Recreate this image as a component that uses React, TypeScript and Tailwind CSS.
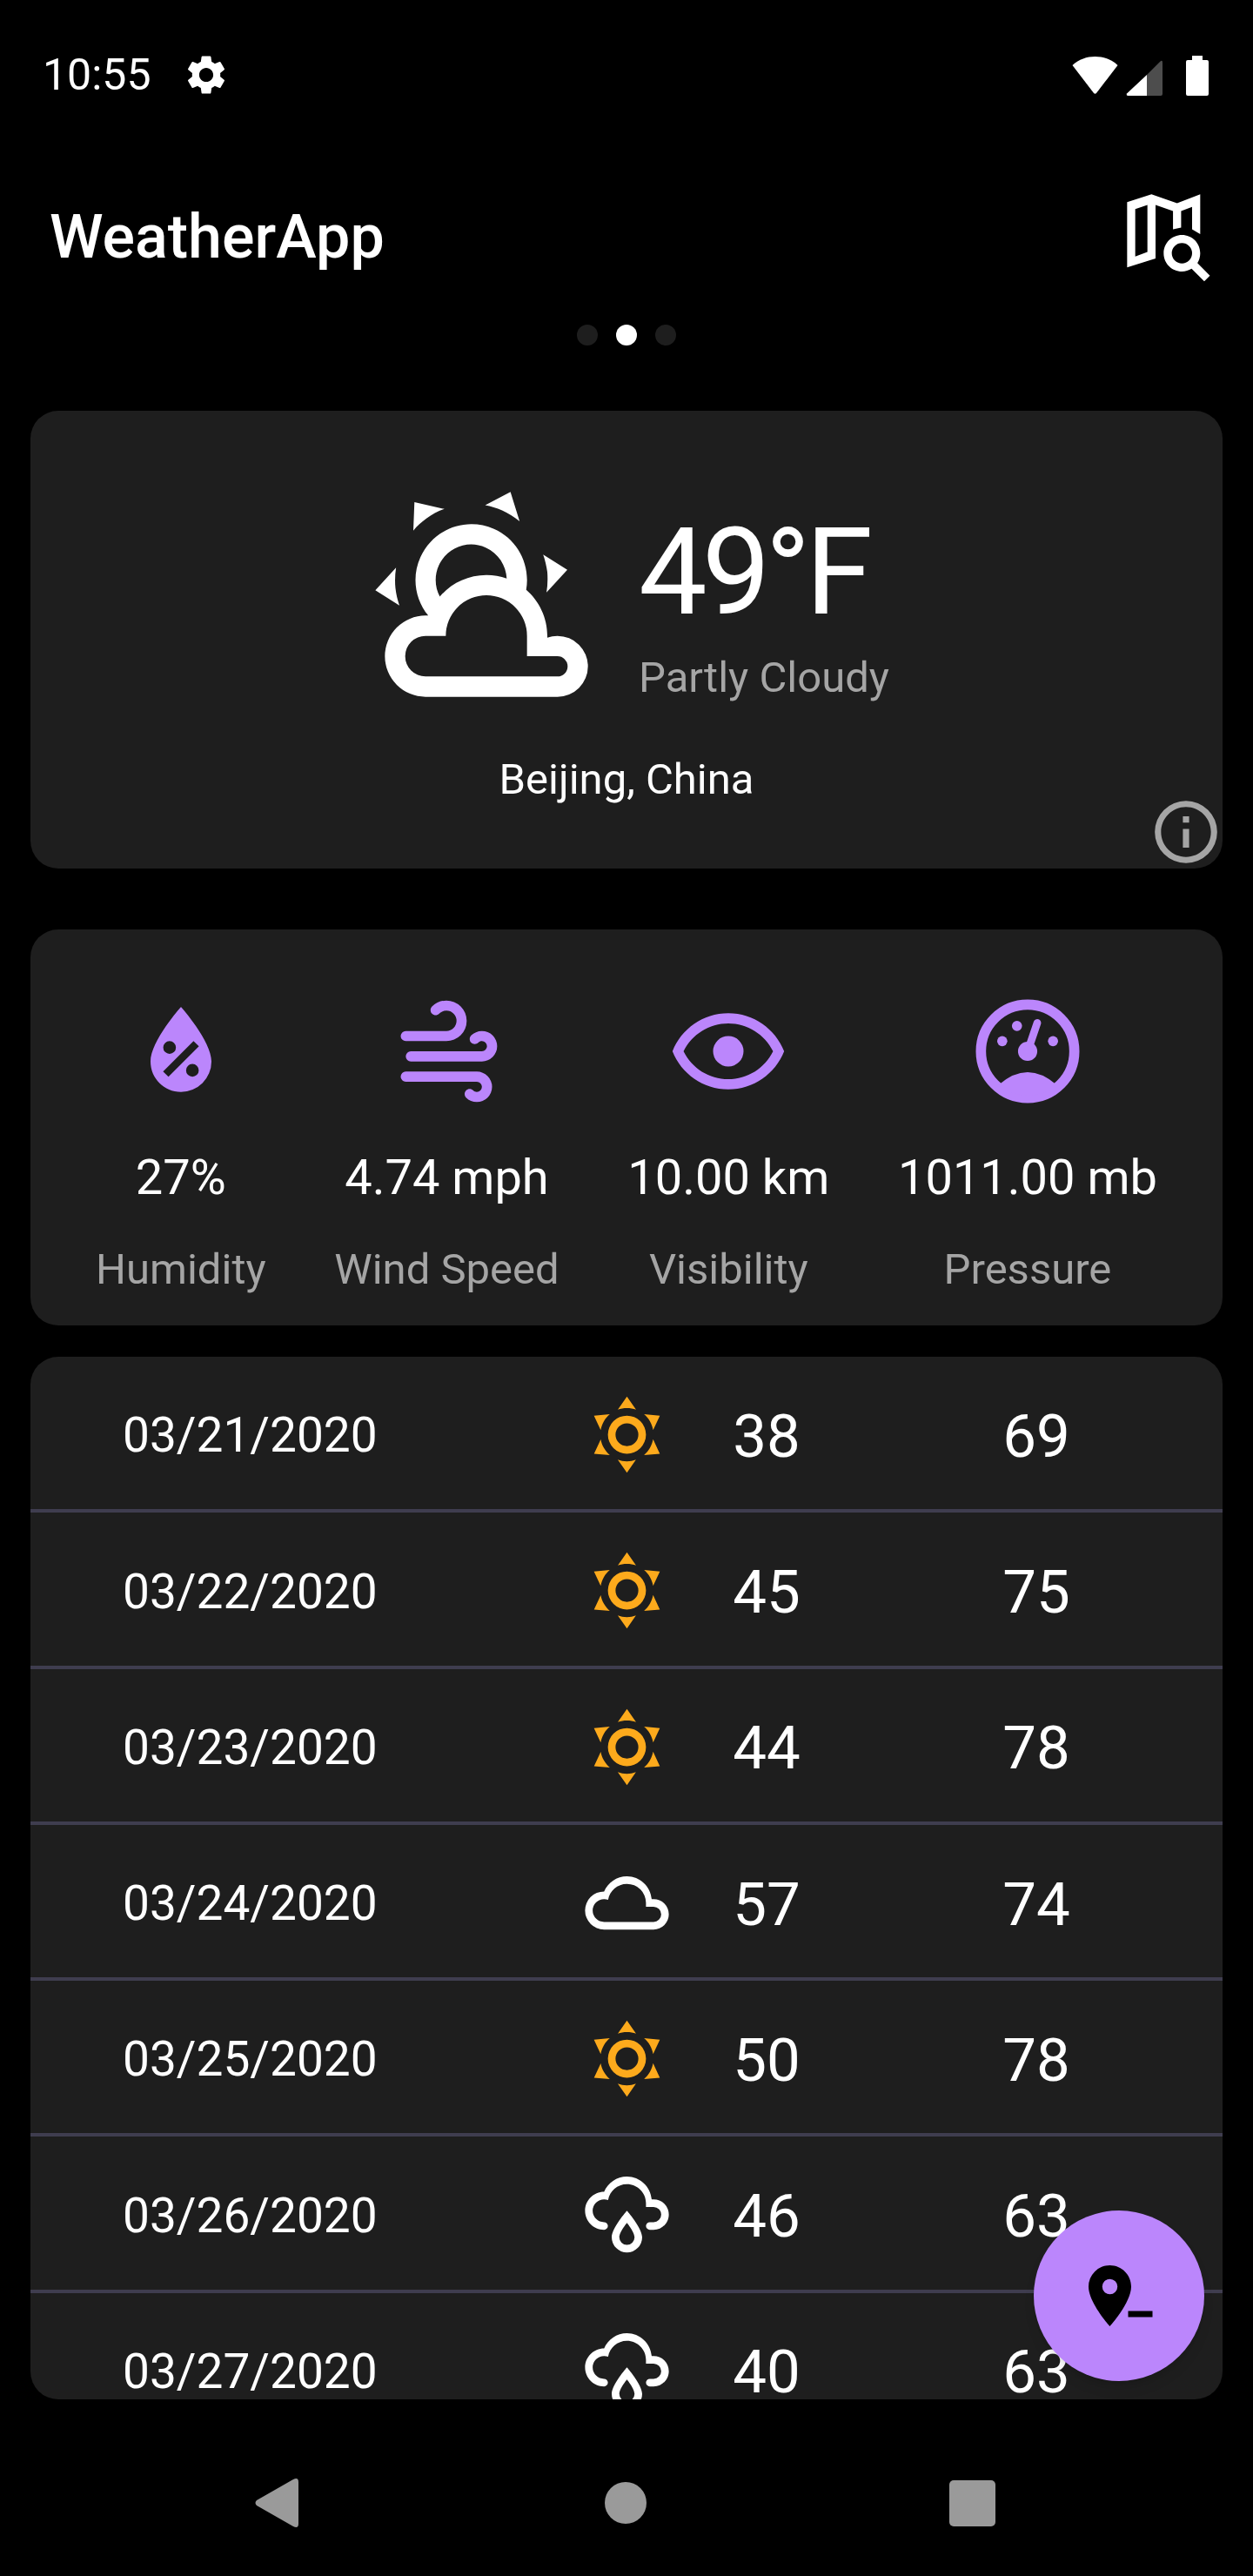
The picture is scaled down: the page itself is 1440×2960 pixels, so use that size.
const SUN =
  "M12,7A5,5 0 0,1 17,12A5,5 0 0,1 12,17A5,5 0 0,1 7,12A5,5 0 0,1 12,7M12,9A3,3 0 0,0 9,12A3,3 0 0,0 12,15A3,3 0 0,0 15,12A3,3 0 0,0 12,9M12,2L14.39,5.42C13.65,5.15 12.84,5 12,5C11.16,5 10.35,5.15 9.61,5.42L12,2M3.34,7L7.5,6.65C6.9,7.16 6.36,7.78 5.94,8.5C5.5,9.24 5.25,10 5.11,10.79L3.34,7M3.36,17L5.12,13.23C5.26,14 5.53,14.78 5.95,15.5C6.37,16.24 6.91,16.86 7.5,17.37L3.36,17M20.65,7L18.88,10.79C18.74,10 18.47,9.23 18.05,8.5C17.63,7.78 17.1,7.15 16.5,6.64L20.65,7M20.64,17L16.5,17.36C17.09,16.85 17.62,16.22 18.04,15.5C18.46,14.77 18.73,14 18.87,13.21L20.64,17M12,22L9.59,18.56C10.33,18.83 11.14,19 12,19C12.82,19 13.63,18.83 14.37,18.56L12,22Z";
const CLOUD =
  "M6,19A5,5 0 0,1 1,14A5,5 0 0,1 6,9C7,6.65 9.3,5 12,5C15.43,5 18.24,7.66 18.5,11.03L19,11A4,4 0 0,1 23,15A4,4 0 0,1 19,19H6M19,13H17V12A5,5 0 0,0 12,7C9.5,7 7.45,8.82 7.06,11.19C6.73,11.07 6.37,11 6,11A3,3 0 0,0 3,14A3,3 0 0,0 6,17H19A2,2 0 0,0 21,15A2,2 0 0,0 19,13Z";
const RAIN =
  "M6,14.03A1,1 0 0,1 7,15.03C7,15.58 6.55,16.03 6,16.03C3.24,16.03 1,13.79 1,11.03C1,8.27 3.24,6.03 6,6.03C7,3.68 9.3,2.03 12,2.03C15.43,2.03 18.24,4.69 18.5,8.06L19,8.03A4,4 0 0,1 23,12.03C23,14.23 21.21,16.03 19,16.03H18C17.45,16.03 17,15.58 17,15.03C17,14.47 17.45,14.03 18,14.03H19A2,2 0 0,0 21,12.03A2,2 0 0,0 19,10.03H17V9.03C17,6.27 14.76,4.03 12,4.03C9.5,4.03 7.45,5.84 7.06,8.21C6.73,8.09 6.37,8.03 6,8.03A3,3 0 0,0 3,11.03A3,3 0 0,0 6,14.03M12,11C12,11 8,15.5 8,18A4,4 0 0,0 16,18C16,15.5 12,11 12,11M12,14.2C12,14.2 10,16.6 10,18A2,2 0 0,0 14,18C14,16.6 12,14.2 12,14.2Z";
const PARTLY =
  "M12.74,5.47C15.1,6.5 16.35,9.03 15.92,11.46C17.19,12.56 18,14.19 18,16V16.17C18.31,16.06 18.65,16 19,16A3,3 0 0,1 22,19A3,3 0 0,1 19,22H6A4,4 0 0,1 2,18A4,4 0 0,1 6,14H6.27C5,12.45 4.6,10.24 5.5,8.26C6.72,5.5 9.97,4.24 12.74,5.47M11.93,7.3C10.16,6.5 8.09,7.31 7.31,9.07C6.85,10.09 6.93,11.22 7.41,12.13C8.5,10.83 10.16,10 12,10C12.7,10 13.38,10.12 14,10.34C13.94,9.06 13.18,7.86 11.93,7.3M13.55,3.64C13,3.4 12.45,3.23 11.88,3.12L14.37,1.82L15.27,4.71C14.76,4.29 14.19,3.93 13.55,3.64M6.09,4.44C5.6,4.79 5.17,5.19 4.8,5.63L4.91,2.82L7.87,3.5C7.25,3.71 6.65,4.03 6.09,4.44M18,9.71C17.91,9.12 17.78,8.55 17.59,8L19.97,9.5L17.92,11.73C18.03,11.08 18.05,10.4 18,9.71M3.04,11.3C3.11,11.9 3.24,12.47 3.43,13L1.06,11.5L3.1,9.28C3,9.93 2.97,10.61 3.04,11.3M19,18H16V16A4,4 0 0,0 12,12A4,4 0 0,0 8,16H6A2,2 0 0,0 4,18A2,2 0 0,0 6,20H19A1,1 0 0,0 20,19A1,1 0 0,0 19,18Z";
const DROP =
  "M12,3.25C12,3.25 6,10 6,14C6,17.32 8.69,20 12,20A6,6 0 0,0 18,14C18,10 12,3.25 12,3.25M14.47,9.97L15.53,11.03L9.53,17.03L8.47,15.97M9.75,10A1.25,1.25 0 0,1 11,11.25A1.25,1.25 0 0,1 9.75,12.5A1.25,1.25 0 0,1 8.5,11.25A1.25,1.25 0 0,1 9.75,10M14.25,14.5A1.25,1.25 0 0,1 15.5,15.75A1.25,1.25 0 0,1 14.25,17A1.25,1.25 0 0,1 13,15.75A1.25,1.25 0 0,1 14.25,14.5Z";
const WIND =
  "M4,10A1,1 0 0,1 3,9A1,1 0 0,1 4,8H12A2,2 0 0,0 14,6A2,2 0 0,0 12,4C11.45,4 10.95,4.22 10.59,4.59C10.2,5 9.56,5 9.17,4.59C8.78,4.2 8.78,3.56 9.17,3.17C9.9,2.45 10.9,2 12,2A4,4 0 0,1 16,6A4,4 0 0,1 12,10H4M19,12A1,1 0 0,0 20,11A1,1 0 0,0 19,10C18.72,10 18.47,10.11 18.29,10.29C17.9,10.68 17.27,10.68 16.88,10.29C16.5,9.9 16.5,9.27 16.88,8.88C17.42,8.34 18.17,8 19,8A3,3 0 0,1 22,11A3,3 0 0,1 19,14H5A1,1 0 0,1 4,13A1,1 0 0,1 5,12H19M18,18H4A1,1 0 0,1 3,17A1,1 0 0,1 4,16H18A3,3 0 0,1 21,19A3,3 0 0,1 18,22C17.17,22 16.42,21.66 15.88,21.12C15.5,20.73 15.5,20.1 15.88,19.71C16.27,19.32 16.9,19.32 17.29,19.71C17.47,19.89 17.72,20 18,20A1,1 0 0,0 19,19A1,1 0 0,0 18,18Z";
const EYE =
  "M12,9A3,3 0 0,1 15,12A3,3 0 0,1 12,15A3,3 0 0,1 9,12A3,3 0 0,1 12,9M12,4.5C17,4.5 21.27,7.61 23,12C21.27,16.39 17,19.5 12,19.5C7,19.5 2.73,16.39 1,12C2.73,7.61 7,4.5 12,4.5M3.18,12C4.83,15.36 8.24,17.5 12,17.5C15.76,17.5 19.17,15.36 20.82,12C19.17,8.64 15.76,6.5 12,6.5C8.24,6.5 4.83,8.64 3.18,12Z";
const GEAR =
  "M19.14,12.94c.04-.3.06-.61.06-.94 0-.32-.02-.64-.07-.94l2.03-1.58c.18-.14.23-.41.12-.61l-1.92-3.32c-.12-.22-.37-.29-.59-.22l-2.39.96c-.5-.38-1.03-.7-1.62-.94l-.36-2.54c-.04-.24-.24-.41-.48-.41h-3.84c-.24 0-.43.17-.47.41l-.36 2.54c-.59.24-1.13.57-1.62.94l-2.39-.96c-.22-.08-.47 0-.59.22L2.74 8.87c-.12.21-.08.47.12.61l2.03 1.58c-.05.3-.09.63-.09.94s.02.64.07.94l-2.03 1.58c-.18.14-.23.41-.12.61l1.92 3.32c.12.22.37.29.59.22l2.39-.96c.5.38 1.03.7 1.62.94l.36 2.54c.05.24.24.41.48.41h3.84c.24 0 .44-.17.47-.41l.36-2.54c.59-.24 1.13-.56 1.62-.94l2.39.96c.22.08.47 0 .59-.22l1.92-3.32c.12-.22.07-.47-.12-.61l-2.01-1.58zM12 15.6c-1.98 0-3.6-1.62-3.6-3.6s1.62-3.6 3.6-3.6 3.6 1.62 3.6 3.6-1.62 3.6-3.6 3.6z";
const MAP_SEARCH =
  "M15.5,12C18,12 20,14 20,16.5C20,17.38 19.75,18.21 19.31,18.9L22.39,22L21,23.39L17.88,20.32C17.19,20.75 16.37,21 15.5,21C13,21 11,19 11,16.5C11,14 13,12 15.5,12M15.5,14A2.5,2.5 0 0,0 13,16.5A2.5,2.5 0 0,0 15.5,19A2.5,2.5 0 0,0 18,16.5A2.5,2.5 0 0,0 15.5,14ZM2,3.9L8,2L14.3,4.2L20,2V11.8L18,10.6V5.1L15.3,6.1V10.2L13.3,10.6V6.1L9,4.6V17.8L2,20ZM4,5.6V17.3L7,16.2V4.6Z";
const MARKER_MINUS =
  "M9,11.5A2.5,2.5 0 0,0 11.5,9A2.5,2.5 0 0,0 9,6.5A2.5,2.5 0 0,0 6.5,9A2.5,2.5 0 0,0 9,11.5M9,2C12.86,2 16,5.13 16,9C16,14.25 9,22 9,22C9,22 2,14.25 2,9A7,7 0 0,1 9,2M15,17H23V19H15V17Z";
const INFO =
  "M11,9H13V7H11M12,20C7.59,20 4,16.41 4,12C4,7.59 7.59,4 12,4C16.41,4 20,7.59 20,12C20,16.41 16.41,20 12,20M12,2A10,10 0 0,0 2,12A10,10 0 0,0 12,22A10,10 0 0,0 22,12A10,10 0 0,0 12,2M11,17H13V11H11V17Z";

function Icon({ d, className }: { d: string; className: string }) {
  return (
    <svg viewBox="0 0 24 24" fill="currentColor" fillRule="evenodd" className={className}>
      <path d={d} />
    </svg>
  );
}

function PressureIcon() {
  return (
    <svg viewBox="0 0 24 24" className="h-[140px] w-[140px] text-[#bb86fc]" fill="currentColor">
      <circle cx="12" cy="12" r="9.2" fill="none" stroke="currentColor" strokeWidth="2" />
      <circle cx="12" cy="12" r="1.9" />
      <path d="M12 12L13.9 6.4" stroke="currentColor" strokeWidth="1.5" strokeLinecap="round" />
      <circle cx="9.9" cy="7" r="1" />
      <circle cx="7" cy="10" r="1" />
      <circle cx="17" cy="10" r="1" />
      <path d="M6.3 18.6Q12 13.6 17.7 18.6A8.7 8.7 0 0 1 6.3 18.6Z" />
    </svg>
  );
}

const stats = [
  { value: "27%", label: "Humidity", icon: <Icon d={DROP} className="h-[140px] w-[140px] text-[#bb86fc]" /> },
  { value: "4.74 mph", label: "Wind Speed", icon: <Icon d={WIND} className="h-[140px] w-[140px] text-[#bb86fc]" /> },
  { value: "10.00 km", label: "Visibility", icon: <Icon d={EYE} className="h-[140px] w-[140px] text-[#bb86fc]" /> },
  { value: "1011.00 mb", label: "Pressure", icon: <PressureIcon /> },
];

const days = [
  { date: "03/21/2020", kind: "sun", low: 38, high: 69 },
  { date: "03/22/2020", kind: "sun", low: 45, high: 75 },
  { date: "03/23/2020", kind: "sun", low: 44, high: 78 },
  { date: "03/24/2020", kind: "cloud", low: 57, high: 74 },
  { date: "03/25/2020", kind: "sun", low: 50, high: 78 },
  { date: "03/26/2020", kind: "rain", low: 46, high: 63 },
  { date: "03/27/2020", kind: "rain", low: 40, high: 63 },
];

function DayIcon({ kind }: { kind: string }) {
  if (kind === "sun") return <Icon d={SUN} className="h-[105px] w-[105px] text-[#fdaa1c]" />;
  if (kind === "cloud") return <Icon d={CLOUD} className="h-[105px] w-[105px] text-white" />;
  return <Icon d={RAIN} className="h-[105px] w-[105px] text-white" />;
}

export default function App() {
  return (
    <div className="relative flex h-[2960px] w-[1440px] flex-col overflow-hidden bg-black font-['Roboto',sans-serif] text-white">
      <div className="flex h-[172px] items-center pl-[49px] pr-[51px]">
        <span className="text-[50px] leading-none">10:55</span>
        <Icon d={GEAR} className="ml-[36px] h-[54px] w-[54px] text-white" />
        <div className="ml-auto flex items-center">
          <svg viewBox="0 0 53 43" className="h-[43px] w-[53px]" fill="white">
            <path d="M0.5 10C8 3 17 0 26.5 0C36 0 45 3 52.5 10L28 42Q26.5 43.5 25 42Z" />
          </svg>
          <svg viewBox="0 0 42 42" className="ml-[9px] mt-[5px] h-[42px] w-[42px]">
            <path d="M1 39.5L24 18V42H2.5Q0 42 1 39.5Z" fill="white" />
            <path d="M24 18L39 3Q42 0 42 4V40Q42 42 40 42H24Z" fill="#4d4d4d" />
          </svg>
          <svg viewBox="0 0 26 46" className="ml-[27px] mt-[1px] h-[46px] w-[26px]" fill="white">
            <path d="M7 0H19V5H24Q26 5 26 7V44Q26 46 24 46H2Q0 46 0 44V7Q0 5 2 5H7Z" />
          </svg>
        </div>
      </div>

      <div className="flex h-[200px] items-center justify-between pl-[57px] pr-[42px]">
        <span className="text-[70px] font-medium leading-none">WeatherApp</span>
        <Icon d={MAP_SEARCH} className="mb-1 h-[112px] w-[112px] text-white" />
      </div>

      <div className="mt-px flex justify-center gap-[21px]">
        <div className="h-6 w-6 rounded-full bg-[#1e1e1e]" />
        <div className="h-6 w-6 rounded-full bg-white" />
        <div className="h-6 w-6 rounded-full bg-[#1e1e1e]" />
      </div>

      <section className="relative mx-[35px] mt-[75px] flex h-[526px] flex-col items-center rounded-[32px] bg-[#1e1e1e] pt-[72px]">
        <div className="flex items-start gap-[35px]">
          <Icon d={PARTLY} className="h-[280px] w-[280px] text-white" />
          <div className="flex w-[287px] flex-col pt-[38px]">
            <span className="whitespace-nowrap text-[140px] leading-[150px] tracking-[-6px]">49°F</span>
            <span className="mt-[17px] whitespace-nowrap text-[49px] leading-[60px] text-[#a5a5a5]">Partly Cloudy</span>
          </div>
        </div>
        <span className="mt-[42px] text-[49px] leading-[60px]">Beijing, China</span>
        <Icon d={INFO} className="absolute -bottom-px -right-px h-[86px] w-[86px] text-[#a5a5a5]" />
      </section>

      <section className="mx-[35px] mt-[70px] flex h-[455px] justify-between rounded-[32px] bg-[#1e1e1e] px-[75px] pt-[70px]">
        {stats.map((stat) => (
          <div key={stat.label} className="flex flex-col items-center">
            {stat.icon}
            <span className="mt-[45px] text-[56px] leading-[60px]">{stat.value}</span>
            <span className="mt-[46px] text-[49px] leading-[60px] text-[#a5a5a5]">{stat.label}</span>
          </div>
        ))}
      </section>

      <section className="mx-[35px] mt-[36px] h-[1198px] overflow-hidden rounded-[32px] bg-[#1e1e1e]">
        {days.map((day) => (
          <div key={day.date} className="flex h-[179.25px] items-center border-b-4 border-[#3f3d4f] pt-1">
            <span className="mt-[2px] w-[598px] pl-[106px] text-[55px]">{day.date}</span>
            <div className="flex w-[174px] justify-center">
              <DayIcon kind={day.kind} />
            </div>
            <span className="mt-[4px] w-[148px] text-center text-[69px]">{day.low}</span>
            <span className="ml-[162px] mt-[4px] w-[148px] text-center text-[69px]">{day.high}</span>
          </div>
        ))}
      </section>

      <div className="mt-[91px] flex items-center pl-[293px]">
        <svg viewBox="0 0 50 56" className="h-[56px] w-[50px]" fill="#9a9a9a">
          <path d="M44 1Q50 -2 50 4V52Q50 58 44 55L2 31Q-1 28 2 25Z" />
        </svg>
        <div className="ml-[352px] h-[48px] w-[48px] rounded-full bg-[#9a9a9a]" />
        <div className="ml-[348px] h-[53px] w-[53px] rounded-[5px] bg-[#9a9a9a]" />
      </div>

      <button className="absolute bottom-[224px] right-[56px] flex h-[196px] w-[196px] items-center justify-center rounded-full bg-[#bb86fc] shadow-lg">
        <Icon d={MARKER_MINUS} className="h-[84px] w-[84px] text-black" />
      </button>
    </div>
  );
}
